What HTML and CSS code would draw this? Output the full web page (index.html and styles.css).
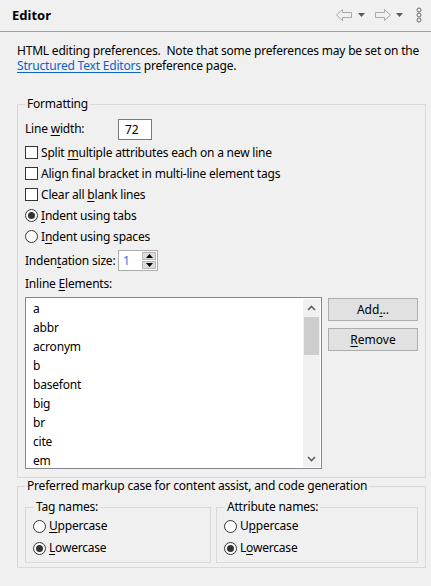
FILE: index.html
```html
<!DOCTYPE html>
<html>
<head>
<meta charset="utf-8">
<link rel="stylesheet" href="styles.css">
</head>
<body>
<div class="page">
  <div class="header">
    <div class="title">Editor</div>
    <div class="nav">
      <svg class="arrow" width="17" height="14" viewBox="0 0 17 14"><path d="M0.5 7 L6.5 1.5 L6.5 4.5 L15.5 4.5 L15.5 9.5 L6.5 9.5 L6.5 12.5 Z" fill="none" stroke="#a9a9a9" stroke-width="1"/></svg>
      <svg class="drop" width="7" height="4" viewBox="0 0 7 4"><path d="M0 0 L7 0 L3.5 4 Z" fill="#5a5a5a"/></svg>
      <svg class="arrow" width="17" height="14" viewBox="0 0 17 14"><path d="M16.5 7 L10.5 1.5 L10.5 4.5 L1.5 4.5 L1.5 9.5 L10.5 9.5 L10.5 12.5 Z" fill="none" stroke="#a9a9a9" stroke-width="1"/></svg>
      <svg class="drop" width="7" height="4" viewBox="0 0 7 4"><path d="M0 0 L7 0 L3.5 4 Z" fill="#5a5a5a"/></svg>
      <svg class="dots" width="6" height="16" viewBox="0 0 6 16"><circle cx="3" cy="3" r="2" fill="none" stroke="#6a6a6a"/><circle cx="3" cy="8" r="2" fill="none" stroke="#6a6a6a"/><circle cx="3" cy="13" r="2" fill="none" stroke="#6a6a6a"/></svg>
    </div>
  </div>

  <div class="content">
    <p class="desc">HTML editing preferences.&nbsp; Note that some preferences may be set on the <a class="link" href="#">Structured Text Editors</a> preference page.</p>

    <fieldset class="group formatting">
      <legend>Formatting</legend>
      <div class="row row-field">
        <span class="label">Line <u>w</u>idth:</span>
        <span class="textbox">72</span>
      </div>
      <div class="row"><span class="check"></span><span>Split <u>m</u>ultiple attributes each on a new line</span></div>
      <div class="row"><span class="check"></span><span>Ali<u>g</u>n final bracket in multi-line element tags</span></div>
      <div class="row"><span class="check"></span><span>Clear all <u>b</u>lank lines</span></div>
      <div class="row"><span class="radio on"></span><span><u>I</u>ndent using tabs</span></div>
      <div class="row"><span class="radio"></span><span>I<u>n</u>dent using spaces</span></div>
      <div class="row row-spin">
        <span class="label">Inden<u>t</u>ation size:</span>
        <span class="spinner">
          <span class="spin-text"><span class="caret">1</span></span>
          <span class="spin-btns">
            <span class="spin-btn"><svg width="7" height="4" viewBox="0 0 7 4"><path d="M0 4 L7 4 L3.5 0 Z" fill="#000"/></svg></span>
            <span class="spin-btn"><svg width="7" height="4" viewBox="0 0 7 4"><path d="M0 0 L7 0 L3.5 4 Z" fill="#000"/></svg></span>
          </span>
        </span>
      </div>
      <div class="row row-label"><span>Inline <u>E</u>lements:</span></div>
      <div class="list-area">
        <div class="listbox">
          <ul class="items">
            <li>a</li><li>abbr</li><li>acronym</li><li>b</li><li>basefont</li><li>big</li><li>br</li><li>cite</li><li>em</li>
          </ul>
          <div class="scrollbar">
            <div class="sb-arrow"><svg width="9" height="6" viewBox="0 0 9 6"><path d="M1 5 L4.5 1.5 L8 5" fill="none" stroke="#606060" stroke-width="1.6"/></svg></div>
            <div class="sb-track"><div class="sb-thumb"></div></div>
            <div class="sb-arrow"><svg width="9" height="6" viewBox="0 0 9 6"><path d="M1 1 L4.5 4.5 L8 1" fill="none" stroke="#606060" stroke-width="1.6"/></svg></div>
          </div>
        </div>
        <div class="buttons">
          <button class="btn">Add<u>.</u>..</button>
          <button class="btn"><u>R</u>emove</button>
        </div>
      </div>
    </fieldset>

    <fieldset class="group markup">
      <legend>Preferred markup case for content assist, and code generation</legend>
      <div class="subgroups">
        <fieldset class="group sub">
          <legend>Tag names:</legend>
          <div class="row"><span class="radio"></span><span><u>U</u>ppercase</span></div>
          <div class="row"><span class="radio on"></span><span><u>L</u>owercase</span></div>
        </fieldset>
        <fieldset class="group sub">
          <legend>Attribute names:</legend>
          <div class="row"><span class="radio"></span><span>U<u>p</u>percase</span></div>
          <div class="row"><span class="radio on"></span><span>L<u>o</u>wercase</span></div>
        </fieldset>
      </div>
    </fieldset>
  </div>
</div>
</body>
</html>
```

FILE: styles.css
```css
* { box-sizing: border-box; }
html, body { margin: 0; padding: 0; }
body {
  background: #f0f0f0;
  font-family: "Noto Sans", "Open Sans", sans-serif;
  font-size: 12px;
  letter-spacing: -0.2px;
  color: #000;
  width: 431px;
  height: 586px;
  overflow: hidden;
  line-height: 16px;
}
u { text-decoration: underline; text-underline-offset: 2px; }
.label, .row span { white-space: nowrap; }

.header {
  height: 32px;
  border-bottom: 1px solid #a0a0a0;
  display: flex;
  align-items: center;
  justify-content: space-between;
  padding: 0 9px 0 12px;
}
.title { font-weight: bold; font-size: 13px; margin-top: -2px; letter-spacing: 0; }
.nav { display: flex; align-items: center; margin-top: -2px; }
.nav .arrow { display: block; }
.nav .drop { display: block; margin: 0 9px 0 5px; }
.nav .dots { display: block; margin-left: 4px; }

.content { padding: 0 4px 0 17px; }
.desc { margin: 11px 0 0; line-height: 15px; }
.link { color: #0a64c8; text-decoration: underline; text-underline-offset: 2px; }

.group {
  margin: 0;
  border: 1px solid #d9d9d9;
  padding: 0 7px;
  min-width: 0;
}
.group legend {
  padding: 0 2px;
  margin-left: 0;
  line-height: 16px;
}
.formatting { width: 409px; margin-top: 23px; padding-bottom: 8px; }

.row { display: flex; align-items: center; height: 21px; }
.row-field { height: 22px; margin-top: 6px; margin-bottom: 2px; }
.row-field .label { width: 93px; flex: none; }
.textbox {
  width: 34px; height: 21px;
  background: #fff;
  border: 1px solid #7a7a7a;
  padding-left: 6px;
  line-height: 19px;
}
.row-spin { height: 23px; margin-top: 2px; }
.row-spin .label { width: 93px; flex: none; }
.spinner {
  display: flex;
  width: 40px; height: 21px;
  border: 1px solid #acacac;
  background: #fff;
}
.spin-text { flex: 1; padding-left: 4px; line-height: 19px; }
.caret { color: #2a7ad8; }
.spin-btns { width: 16px; display: flex; flex-direction: column; padding: 1px; gap: 1px; background: #fff; }
.spin-btn { flex: 1; background: #dcdcdc; border: 1px solid #b8b8b8; display: flex; align-items: center; justify-content: center; }
.spin-btn svg { display: block; }
.row-label { height: 20px; margin-top: 2px; }

.check {
  width: 13px; height: 13px;
  border: 1px solid #333;
  background: #fff;
  margin-right: 3px;
  flex: none;
}
.radio {
  width: 13px; height: 13px;
  border: 1px solid #333;
  border-radius: 50%;
  background: #fff;
  margin-right: 3px;
  flex: none;
  display: flex; align-items: center; justify-content: center;
}
.radio.on::after {
  content: "";
  width: 7px; height: 7px;
  border-radius: 50%;
  background: #333;
}

.list-area { display: flex; gap: 6px; margin-top: 3px; }
.listbox {
  width: 297px; height: 172px;
  background: #fff;
  border: 1px solid #828790;
  display: flex;
}
.items {
  list-style: none;
  margin: 0; padding: 1px 0 0 7px;
  flex: 1;
  overflow: hidden;
  line-height: 19px;
}
.scrollbar {
  width: 17px;
  background: #f0f0f0;
  display: flex; flex-direction: column;
  margin: 1px 1px 1px 0;
}
.sb-arrow { height: 17px; display: flex; align-items: center; justify-content: center; }
.sb-arrow svg { display: block; }
.sb-track { flex: 1; }
.sb-thumb { margin: 1px 1px 0 1px; height: 38px; background: #cdcdcd; }

.buttons { display: flex; flex-direction: column; gap: 7px; padding-top: 1px; }
.btn {
  width: 90px; height: 23px;
  background: #e1e1e1;
  border: 1px solid #adadad;
  font: inherit;
  color: #000;
  padding: 0;
}

.markup { width: 409px; margin-top: 0; padding-bottom: 4px; }
.subgroups { display: grid; grid-template-columns: 186px 1fr; gap: 5px; margin-top: 5px; }
.sub { padding: 0 7px 3px; }
.sub legend { margin-left: 1px; }
.sub .row { height: 22px; }
```
